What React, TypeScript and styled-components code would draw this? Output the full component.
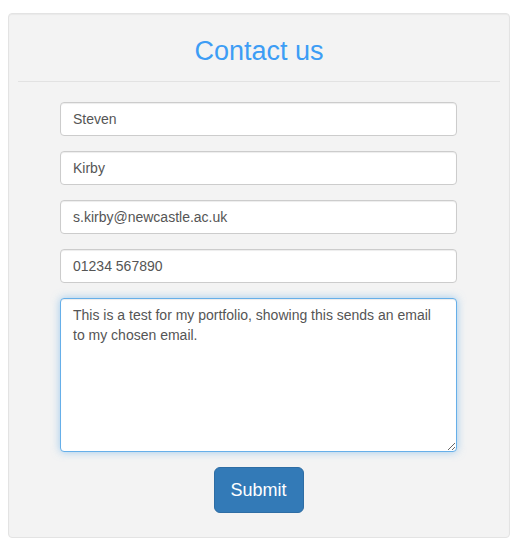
import React from "react";
import styled, { createGlobalStyle } from "styled-components";

const GlobalStyle = createGlobalStyle`
  html, body { margin: 0; padding: 0; background: #ffffff; }
  body { font-family: "Liberation Sans", Arial, sans-serif; }
  * { box-sizing: border-box; }
`;

const Page = styled.div`
  padding: 13px 4px 8px 8px;
`;

const Panel = styled.div`
  background: #f3f3f3;
  border: 1px solid #e3e3e3;
  border-radius: 4px;
  padding: 0 9px 24px 9px;
  box-shadow: inset 0 1px 1px rgba(0, 0, 0, 0.04);
`;

const Title = styled.h2`
  margin: 22px 0 15px 0;
  font-family: "Liberation Sans", Arial, sans-serif;
  font-weight: 400;
  font-size: 27px;
  line-height: 30px;
  color: #3d9df5;
  text-align: center;
`;

const Rule = styled.hr`
  margin: 0 0 20px 0;
  border: 0;
  border-top: 1px solid #e2e2e2;
`;

const Form = styled.form`
  margin: 0 43px 0 42px;
  display: flex;
  flex-direction: column;
  align-items: stretch;
  gap: 15px;
`;

const Field = styled.input`
  display: block;
  width: 100%;
  height: 34px;
  padding: 6px 12px;
  font-family: "Liberation Sans", Arial, sans-serif;
  font-size: 14px;
  line-height: 20px;
  color: #555555;
  background: #ffffff;
  border: 1px solid #cccccc;
  border-radius: 4px;
  box-shadow: inset 0 1px 1px rgba(0, 0, 0, 0.075);
  outline: none;
`;

const Message = styled.textarea<{ $focused?: boolean }>`
  display: block;
  width: 100%;
  height: 154px;
  padding: 6px 12px;
  font-family: "Liberation Sans", Arial, sans-serif;
  font-size: 14px;
  line-height: 20px;
  color: #555555;
  background: #ffffff;
  border: 1px solid ${(p) => (p.$focused ? "#66afe9" : "#cccccc")};
  border-radius: 4px;
  box-shadow: ${(p) =>
    p.$focused
      ? "inset 0 1px 1px rgba(0,0,0,0.075), 0 0 8px rgba(102,175,233,0.6)"
      : "inset 0 1px 1px rgba(0,0,0,0.075)"};
  outline: none;
  resize: vertical;
`;

const Actions = styled.div`
  display: flex;
  justify-content: center;
`;

const SubmitButton = styled.button`
  width: 90px;
  height: 46px;
  padding: 0;
  font-family: "Liberation Sans", Arial, sans-serif;
  font-size: 18px;
  color: #ffffff;
  background: #337ab7;
  border: 1px solid #2e6da4;
  border-radius: 6px;
  cursor: pointer;
`;

export default function App() {
  return (
    <>
      <GlobalStyle />
      <Page>
        <Panel>
          <Title>Contact us</Title>
          <Rule />
          <Form onSubmit={(e) => e.preventDefault()}>
            <Field type="text" defaultValue="Steven" />
            <Field type="text" defaultValue="Kirby" />
            <Field type="email" defaultValue="s.kirby@newcastle.ac.uk" />
            <Field type="tel" defaultValue="01234 567890" />
            <Message
              $focused
              defaultValue="This is a test for my portfolio, showing this sends an email to my chosen email."
            />
            <Actions>
              <SubmitButton type="submit">Submit</SubmitButton>
            </Actions>
          </Form>
        </Panel>
      </Page>
    </>
  );
}
